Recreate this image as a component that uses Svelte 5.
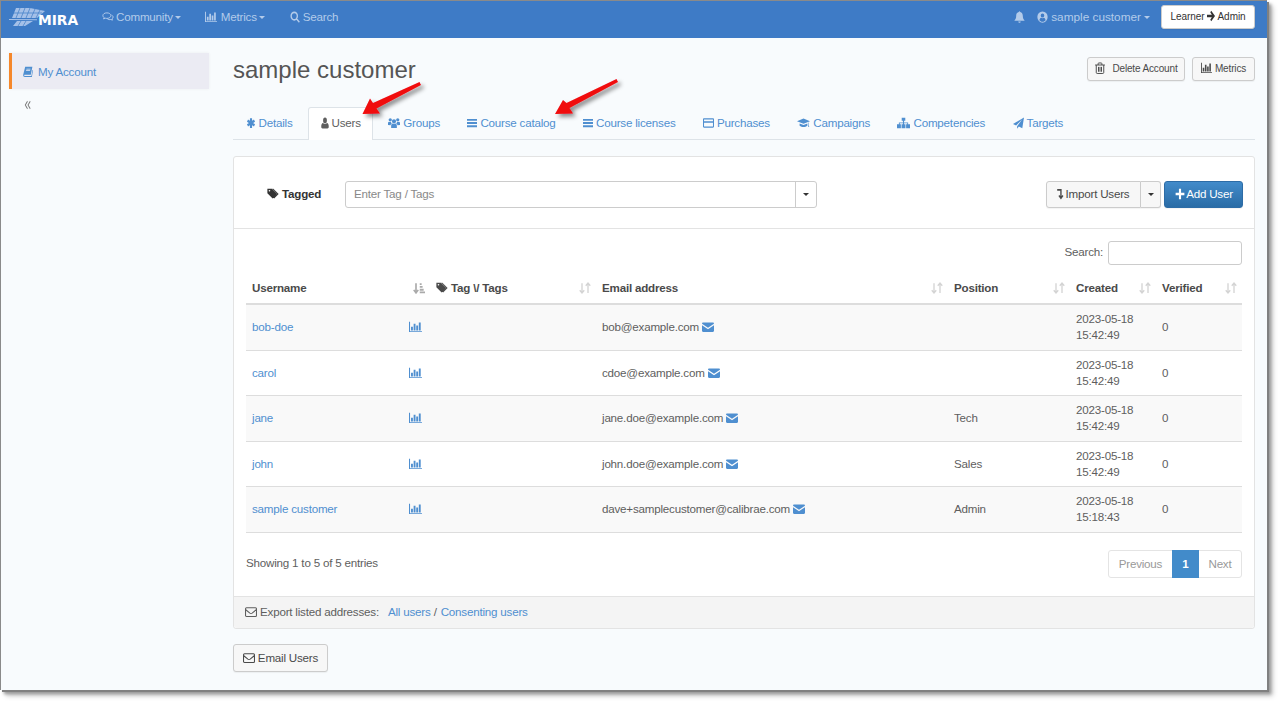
<script>
  const icons = {
    asterisk: { s: 'M8 1.500V14.500M2.400 4.750L13.600 11.250M13.600 4.750L2.400 11.250', w: 3.400 },
    user: { d: 'M8 .8a3.800 3.800 0 1 1 0 7.600A3.800 3.800 0 0 1 8 .8zM3 15.200c-1.500 0-2.500-.8-2.500-2.200 0-2.600.9-4.800 3.700-5 .9.900 2.300 1.400 3.800 1.400s2.900-.5 3.800-1.400c2.800.2 3.700 2.400 3.700 5 0 1.400-1 2.200-2.500 2.200z' },
    users: { d: 'M8 3a2.800 2.800 0 1 1 0 5.600A2.800 2.800 0 0 1 8 3zM3 1.500a2.200 2.200 0 1 1 0 4.400 2.200 2.200 0 0 1 0-4.400zM13 1.500a2.200 2.200 0 1 1 0 4.400 2.200 2.200 0 0 1 0-4.400zM4.200 14.500V11.500c0-1.600.9-2.700 2-3 .5.4 1.100.7 1.800.7s1.300-.3 1.800-.7c1.100.3 2 1.400 2 3v3zM0 10.500V8c0-1 .6-1.600 1.300-1.700.5.3 1 .5 1.600.5l.9-.1c.2.900.7 1.500 1.300 1.900-1 .5-1.600 1.300-1.800 2.400zM16 10.500V8c0-1-.6-1.600-1.300-1.700-.5.3-1 .5-1.600.5l-.9-.1c-.2.900-.7 1.500-1.300 1.900 1 .5 1.600 1.300 1.800 2.400z' },
    bars: { d: 'M0 2.500h16v2.500H0zM0 6.800h16v2.500H0zM0 11.100h16v2.500H0z' },
    card: { d: 'M1.500 1.800h13c.8 0 1.500.7 1.500 1.500v9.400c0 .8-.7 1.500-1.500 1.500h-13c-.8 0-1.500-.7-1.500-1.500V3.300c0-.8.7-1.500 1.500-1.500zM1.500 3.300v2.200h13V3.300zM1.500 7.800v4.900h13V7.800z' },
    cap: { d: 'M8 2L0 5.500l8 3.500 8-3.500zM3.200 8.500v3.100c1.300 1.200 3 1.800 4.800 1.800s3.500-.6 4.800-1.800V8.500L8 10.600zM14.600 7v4l.5 2h-1.600l.5-2V7.500z' },
    sitemap: { d: 'M5.800 1h4.400v4H8.700v2.300h5v2.200H16V15h-4.800V9.500h1.400V8.400H8.700v1.100h1.700V15H5.600V9.500h1.700V8.400H3.400v1.100h1.400V15H0V9.500h2.300V7.300h5V5H5.800z' },
    plane: { d: 'M16 .5L13.500 15l-5-2.300L6 15.800v-3.400L13.500 3l-9 8.300L0 9.300z' },
    tags: { d: 'M.5 1h6l7 7-6 6L.5 7zM3.300 2.600a1.100 1.100 0 1 0 0 2.200 1.100 1.100 0 0 0 0-2.200zM8.500 1l7 7-6 6-1.100-1.100L13.800 8 7 1z' },
    book: { d: 'M3.500 1H15l-2.500 10.500h-10c-.5 0-.7.4-.7.8 0 .6.4.9 1 .9h10.600l1.700-8 .9.6-1.800 9H3c-1.700 0-3-1-2.700-3zM5.500 3.500H12l-.2 1H5.300zM5 5.700h6.500l-.2 1H4.800z' },
    bell: { d: 'M8 .3c.6 0 1 .4 1 1 2.400.4 3.800 2.400 3.800 5 0 3.200.9 4.700 2.400 5.900v.9H.8v-.9c1.500-1.200 2.400-2.700 2.400-5.900 0-2.600 1.400-4.600 3.800-5 0-.6.4-1 1-1zM6.200 13.900h3.600c0 1.100-.8 1.800-1.800 1.800s-1.800-.7-1.800-1.800z' },
    usercircle: { d: 'M8 .5a7.500 7.500 0 1 1 0 15 7.500 7.500 0 0 1 0-15zM8 3.300a2.600 2.600 0 1 0 0 5.200 2.600 2.600 0 0 0 0-5.200zM3.500 12.300c1 1.200 2.700 2 4.500 2s3.500-.8 4.500-2c-.4-1.800-1.400-3-2.600-3.200-.5.4-1.200.6-1.900.6s-1.400-.2-1.900-.6c-1.200.2-2.200 1.400-2.600 3.200z' },
    arrow: { d: 'M8.500 1L16 8l-7.500 7-2-2L9.700 9.800H0V6.200h9.700L6.500 3z' },
    comments: { s: 'M6.500 2.500c-3 0-5.300 1.500-5.300 3.600 0 1.100.6 2 1.600 2.700l-.7 1.800 2.300-1c.7.2 1.400.3 2.100.3 3 0 5.300-1.700 5.300-3.800S9.500 2.500 6.500 2.500zM12.700 5.400c1.300.6 2.100 1.500 2.100 2.700 0 1-.6 1.800-1.500 2.400l.6 1.700-2.200-.9c-1.500.4-3.200.2-4.500-.8', w: 1.300 },
    chart: { d: 'M0 1h1.300v12.500H16v1.300H0zM2.500 7.500h2.300v5H2.500zM5.700 3.500h2.300v9H5.700zM8.900 6h2.300v6.500H8.900zM12.100 2h2.300v10.500h-2.300z' },
    search: { s: 'M6.800 1.800a5 5 0 1 1 0 10 5 5 0 0 1 0-10zM10.500 10.500L15 15', w: 2.200 },
    trash: { s: 'M1.500 4h13M5.500 4V2.300c0-.6.3-1 .8-1h3.400c.5 0 .8.4.8 1V4M3 4v10c0 .8.500 1.300 1.200 1.300h7.600c.7 0 1.200-.5 1.200-1.300V4M6 6.500v6.500M8 6.500v6.500M10 6.500v6.500', w: 1.300 },
    mail: { d: 'M1.500 2h13c.8 0 1.500.7 1.500 1.500L8 9 0 3.500C0 2.700.7 2 1.500 2zM0 5.500l8 5.500 8-5.500v7.500c0 .8-.7 1.500-1.500 1.500h-13C.7 14.500 0 13.800 0 13z' },
    mailo: { s: 'M2 2.300h12c.8 0 1.300.5 1.300 1.300v9c0 .8-.5 1.300-1.300 1.300H2c-.8 0-1.300-.5-1.300-1.300v-9c0-.8.5-1.300 1.300-1.300zM1 5l5.500 4.500c1 .7 2 .7 3 0L15 5', w: 1.400 },
    importi: { s: 'M3.500 2.500h6v10M6.300 10l3.200 3.700 3.200-3.700', w: 2.200 },
    plus: { d: 'M6.300 1h3.400v5.300H15v3.400H9.700V15H6.300V9.700H1V6.300h5.300z' },
    sort: { s: 'M4 1.500v13M1 11l3 3.500 3-3.500M12 14.500v-13M9 5l3-3.500L15 5', w: 1.800 },
    sorted: { s: 'M4 1.500v13M1 10.500l3 4 3-4', w: 2.200, d: 'M9 1.500h2.500v2.500H9zM9 5.300h3.800v2.500H9zM9 9.100h5.200v2.500H9zM9 12.500h7V15H9z' },
    dbl: { s: 'M7 3L2.500 8 7 13M12.500 3L8 8l4.500 5', w: 1.500 }
  };

  const rows = [
    { name: 'bob-doe', email: 'bob@example.com', pos: '', time: '15:42:49' },
    { name: 'carol', email: 'cdoe@example.com', pos: '', time: '15:42:49' },
    { name: 'jane', email: 'jane.doe@example.com', pos: 'Tech', time: '15:42:49' },
    { name: 'john', email: 'john.doe@example.com', pos: 'Sales', time: '15:42:49' },
    { name: 'sample customer', email: 'dave+samplecustomer@calibrae.com', pos: 'Admin', time: '15:18:43' }
  ];

  const tabs = [
    { label: 'Details', icon: 'asterisk', cls: 'w9' },
    { label: 'Users', icon: 'user', cls: 'w8' },
    { label: 'Groups', icon: 'users', cls: 'w12' },
    { label: 'Course catalog', icon: 'bars', cls: 'w10' },
    { label: 'Course licenses', icon: 'bars', cls: 'w10' },
    { label: 'Purchases', icon: 'card', cls: 'w11' },
    { label: 'Campaigns', icon: 'cap', cls: 'w13' },
    { label: 'Competencies', icon: 'sitemap', cls: 'w13' },
    { label: 'Targets', icon: 'plane', cls: 'w11' }
  ];
</script>

{#snippet ic(name, cls = 'w11')}
  <svg class="ic {cls}" viewBox="0 0 16 16" preserveAspectRatio="none" aria-hidden="true">
    {#if icons[name].d}<path d={icons[name].d} fill="currentColor" fill-rule="evenodd" />{/if}
    {#if icons[name].s}<path d={icons[name].s} fill="none" stroke="currentColor" stroke-width={icons[name].w} />{/if}
  </svg>
{/snippet}

{#snippet sortBtn(name = 'sort')}
  <svg class="ic w12 sorter" class:dark={name === 'sorted'} viewBox="0 0 16 16" aria-hidden="true">
    {#if icons[name].d}<path d={icons[name].d} fill="currentColor" />{/if}
    <path d={icons[name].s} fill="none" stroke="currentColor" stroke-width={icons[name].w} />
  </svg>
{/snippet}

<div class="page">
<div class="frame">
  <header class="nav">
    <div class="logo">
      <svg class="stripes" viewBox="0 0 38 20" aria-hidden="true">
        <path d="M7 1h14l15 3-8 7H3zM0 12l28 .3v.9L0 13zM8 14h16l-8 5H4z" fill="#a4c0e8" />
        <path d="M11 1L7 11M16 1l-4 10M21 1l-4 10M26 2l-4 9M31 3l-4 8M12 14l-3 5M17 14l-3 5M3 6h30" stroke="#3e7bc6" stroke-width=".7" fill="none" />
      </svg>
      <span class="mira">MIRA</span>
    </div>
    <nav class="links">
      <a class="nl community">{@render ic('comments', 'w12 g2')}Community<i class="caret"></i></a>
      <a class="nl metrics">{@render ic('chart', 'w12 g4')}Metrics<i class="caret"></i></a>
      <a class="nl">{@render ic('search', 'w10')}Search</a>
    </nav>
    <div class="navright">
      {@render ic('bell', 'w11 bell')}
      <a class="nl acct">{@render ic('usercircle', 'w11')}sample customer<i class="caret"></i></a>
      <button class="btn switch">Learner{@render ic('arrow', 'w8 arrowgap')}Admin</button>
    </div>
  </header>

  <div class="body">
    <aside class="side">
      <div class="sideitem">{@render ic('book', 'w10')}My Account</div>
      <div class="collapse">{@render ic('dbl', 'w8')}</div>
    </aside>

    <main class="main">
      <div class="titlerow">
        <h1>sample customer</h1>
        <div class="topbtns">
          <button class="btn small del">{@render ic('trash', 'w12 gap6')}Delete Account</button>
          <button class="btn small met">{@render ic('chart', 'w11')}Metrics</button>
        </div>
      </div>

      <ul class="tabs">
        {#each tabs as t}
          <li class="tab" class:active={t.label === 'Users'}>{@render ic(t.icon, t.cls)}{t.label}</li>
        {/each}
      </ul>

      <section class="panel">
        <div class="filter">
          <label class="tagged" for="tagInput">{@render ic('tags', 'w12')}Tagged</label>
          <div class="combo">
            <input id="tagInput" placeholder="Enter Tag / Tags" />
            <span class="combocaret"><i class="caret dark"></i></span>
          </div>
          <div class="actions">
            <div class="group">
              <button class="btn import">{@render ic('importi', 'w10 tight')}Import Users</button>
              <button class="btn split"><i class="caret dark"></i></button>
            </div>
            <button class="btn add">{@render ic('plus', 'w10 tight')}Add User</button>
          </div>
        </div>

        <div class="content">
          <div class="searchrow">
            <label for="search">Search:</label>
            <input id="search" />
          </div>

          <table>
            <colgroup>
              <col class="c1" /><col class="c2" /><col class="c3" /><col class="c4" /><col class="c5" /><col class="c6" /><col class="c7" />
            </colgroup>
            <thead>
              <tr>
                <th>Username</th>
                <th>{@render sortBtn('sorted')}</th>
                <th>{@render ic('tags', 'w12')}Tag \/ Tags{@render sortBtn()}</th>
                <th>Email address{@render sortBtn()}</th>
                <th>Position{@render sortBtn()}</th>
                <th>Created{@render sortBtn()}</th>
                <th>Verified{@render sortBtn()}</th>
              </tr>
            </thead>
            <tbody>
              {#each rows as r}
                <tr>
                  <td><a class="lnk">{r.name}</a></td>
                  <td><a class="lnk">{@render ic('chart', 'w13 flush')}</a></td>
                  <td></td>
                  <td>{r.email} <span class="lnk">{@render ic('mail', 'w12 flush')}</span></td>
                  <td>{r.pos}</td>
                  <td>2023-05-18<br />{r.time}</td>
                  <td>0</td>
                </tr>
              {/each}
            </tbody>
          </table>

          <div class="tfoot">
            <span>Showing 1 to 5 of 5 entries</span>
            <div class="pager">
              <span class="pg">Previous</span><span class="pg on">1</span><span class="pg">Next</span>
            </div>
          </div>
        </div>

        <div class="pfoot">
          {@render ic('mailo', 'w12')}Export listed addresses:
          <a class="lnk first">All users</a> / <a class="lnk second">Consenting users</a>
        </div>
      </section>

      <button class="btn email">{@render ic('mailo', 'w12')}Email Users</button>
    </main>
  </div>
</div>
</div>

<svg class="arrows" viewBox="0 0 1280 704" aria-hidden="true">
  <defs>
    <filter id="sh" x="-30%" y="-30%" width="170%" height="170%">
      <feDropShadow dx="3" dy="3" stdDeviation="2" flood-color="#000" flood-opacity=".45" />
    </filter>
  </defs>
  <path filter="url(#sh)" fill="#f0090f" d="M419.500 82L421 85L376.500 108.500L380 113.500L362.500 114L370 98.500L373 103z" />
  <path filter="url(#sh)" fill="#f0090f" d="M616.500 79L618 82L569.500 108L573 113.500L555 114L563 100L566.500 103z" />
</svg>

<style>
  :global(body) {
    margin: 0;
    background: #fff;
    font-family: "Liberation Sans", Arial, sans-serif;
    font-size: 11.600px;
    letter-spacing: -.2px;
    line-height: 16px;
    color: #5e5e5e;
  }

  .page {
    height: 704px;
    overflow: hidden;
    background: #fff;
  }

  .frame {
    width: 1267px;
    height: 690px;
    border: 1px solid #8a8a8a;
    border-width: 1px 0 0 1px;
    box-sizing: border-box;
    background: #f8fbfd;
    box-shadow: 2px 2px 0 #808080, 4px 4px 3px #999, 6px 6px 5px #ccc;
    display: flex;
    flex-direction: column;
  }

  .ic { display: inline-block; vertical-align: -2px; margin-right: 3px; height: 12px; flex: none; }
  .w8 { width: 8px; }
  .w9 { width: 10px; }
  .w10 { width: 10px; }
  .w11 { width: 11px; }
  .w12 { width: 12px; }
  .w13 { width: 13px; }
  .tight { margin: 0 1px; }
  .arrowgap { margin: 0 3px 0 2px; }
  .flush { margin-right: 0; }
  .gap6 { margin-right: 6px; }
  .g2 { margin-right: 2px; }
  .g4 { margin-right: 4px; }

  .caret {
    display: inline-block;
    width: 0;
    height: 0;
    margin-left: 2px;
    vertical-align: 2px;
    border-top: 3px solid currentColor;
    border-left: 3px solid transparent;
    border-right: 3px solid transparent;
  }
  .caret.dark { color: #333; margin: 0; }

  .nav {
    height: 37px;
    flex: none;
    display: flex;
    align-items: center;
    background: #3e7bc6;
    color: #b3cbea;
    padding-bottom: 5px;
    box-sizing: border-box;
  }
  .logo { display: flex; align-items: flex-start; width: 77px; margin: 3px 0 0 8px; height: 24px; }
  .stripes { width: 38px; height: 20px; flex: none; }
  .mira {
    color: #fff;
    font-family: "DejaVu Sans", sans-serif;
    font-weight: 700;
    font-size: 13.800px;
    letter-spacing: 0;
    margin-left: -9px;
    margin-top: 6px;
    line-height: 14px;
  }
  .links { display: flex; align-items: center; margin-left: 16px; }
  .nl { color: inherit; white-space: nowrap; }
  .community { margin-right: 24px; }
  .metrics { margin-right: 25px; }
  .navright { margin-left: auto; display: flex; align-items: center; margin-right: 12px; }
  .navright :global(.bell) { margin-right: 12px; }
  .acct { margin-right: 11px; font-size: 11.800px; letter-spacing: 0; }
  .acct .caret { margin-left: 3px; }

  .btn {
    font: inherit;
    letter-spacing: inherit;
    color: #4a4a4a;
    background: #f7f7f7;
    border: 1px solid #ccc;
    border-radius: 3px;
    cursor: pointer;
    padding: 0;
    white-space: nowrap;
    box-shadow: 0 1px 1px rgba(0, 0, 0, .05);
  }
  .switch {
    width: 94px;
    height: 24px;
    background: #fff;
    font-size: 10px;
    letter-spacing: -.05px;
    color: #333;
  }

  .body { flex: 1; display: flex; min-height: 0; }
  .side { width: 232px; flex: none; padding: 15px 0 0 8px; box-sizing: border-box; }
  .sideitem {
    width: 200px;
    height: 36px;
    display: flex;
    align-items: center;
    padding: 2px 0 0 11px;
    box-sizing: border-box;
    background: #ebebf3;
    border-left: 3px solid #f5872a;
    color: #4f8fd0;
    box-shadow: 0 0 3px rgba(0, 0, 0, .06);
  }
  .sideitem :global(.ic) { margin-right: 5px; }
  .collapse { margin: 8px 0 0 15px; color: #777; }

  .main { flex: 1; padding-right: 12px; min-width: 0; }
  .titlerow { display: flex; justify-content: space-between; height: 69px; }
  h1 { margin: 19px 0 0; font-weight: 400; font-size: 24px; letter-spacing: 0; line-height: 26px; color: #555; }
  .topbtns { display: flex; gap: 7px; padding-top: 19px; }
  .small { height: 24px; font-size: 10px; letter-spacing: -.15px; }
  .del { width: 98px; }
  .met { width: 63px; }

  .tabs {
    list-style: none;
    margin: 0;
    padding: 0;
    display: flex;
    gap: 2.400px;
    height: 33px;
    border-bottom: 1px solid #dde3e8;
    box-sizing: border-box;
  }
  .tab {
    padding: 7px 11.500px 0;
    height: 33px;
    box-sizing: border-box;
    color: #4f8fd0;
    border: 1px solid transparent;
    border-bottom: 0;
    white-space: nowrap;
  }
  .tab:first-child { margin-right: .6px; }
  .tab.active {
    background: #fff;
    color: #5e5e5e;
    border-color: #dde3e8;
    border-radius: 3px 3px 0 0;
  }

  .panel {
    margin-top: 16px;
    height: 473px;
    box-sizing: border-box;
    background: #fff;
    border: 1px solid #e3e3e3;
    border-radius: 3px;
    display: flex;
    flex-direction: column;
  }
  .filter {
    height: 72px;
    flex: none;
    box-sizing: border-box;
    border-bottom: 1px solid #e3e3e3;
    display: flex;
    align-items: center;
    padding: 3px 11px 0 33px;
  }
  .tagged { width: 78px; font-weight: 700; color: #333; flex: none; }
  .combo {
    width: 472px;
    height: 27px;
    box-sizing: border-box;
    border: 1px solid #ccc;
    border-radius: 3px;
    display: flex;
    background: #fff;
  }
  .combo input {
    flex: 1;
    border: 0;
    outline: 0;
    font: inherit;
    letter-spacing: inherit;
    padding: 0 8px;
    background: transparent;
    min-width: 0;
  }
  input::placeholder { color: #888; opacity: 1; }
  .combocaret {
    width: 20px;
    border-left: 1px solid #ccc;
    display: flex;
    align-items: center;
    justify-content: center;
  }
  .actions { display: flex; gap: 3px; margin-left: auto; }
  .group { display: flex; }
  .import { width: 95px; height: 27px; padding-right: 4px; border-radius: 3px 0 0 3px; }
  .split { width: 20px; height: 27px; border-left: 0; border-radius: 0 3px 3px 0; }
  .add {
    width: 79px;
    height: 27px;
    color: #fff;
    border-color: #2d6ca6;
    background: linear-gradient(#428bca, #2a6ca6);
  }

  .content { flex: 1; padding: 12px 12px 0; min-height: 0; }
  .searchrow { display: flex; justify-content: flex-end; align-items: center; gap: 5px; height: 24px; }
  .searchrow label { margin-top: -2px; }
  .searchrow input {
    width: 134px;
    height: 24px;
    box-sizing: border-box;
    border: 1px solid #ccc;
    border-radius: 3px;
    outline: 0;
  }

  table { width: 100%; border-collapse: collapse; table-layout: fixed; margin-top: 10px; }
  .c1 { width: 157px; }
  .c2 { width: 27px; }
  .c3 { width: 166px; }
  .c4 { width: 352px; }
  .c5 { width: 122px; }
  .c6 { width: 86px; }
  .c7 { width: 86px; }
  th {
    text-align: left;
    font-weight: 700;
    height: 29px;
    padding: 0 6px 3px;
    box-sizing: border-box;
    border-bottom: 2px solid #ddd;
    position: relative;
    white-space: nowrap;
    color: #4a4a4a;
  }
  .sorter { position: absolute; right: 5px; top: 7px; margin: 0; color: #d4d4d4; }
  .sorter.dark { color: #aaa; }
  td { padding: 6.250px 6px; box-sizing: border-box; border-bottom: 1px solid #ddd; white-space: nowrap; }
  tbody tr:nth-child(odd) td { background: #f9f9f9; }
  .lnk { color: #4f8fd0; }
  .tfoot { display: flex; justify-content: space-between; align-items: center; margin-top: 17px; }
  .tfoot > span { margin-top: -2px; }
  .pager {
    display: flex;
    height: 28px;
    border: 1px solid #e4e4e4;
    border-radius: 3px;
    box-sizing: border-box;
  }
  .pg { display: flex; align-items: center; padding: 0 9.500px; color: #999; }
  .pg.on { background: #428bca; color: #fff; font-weight: 700; margin: -1px 0; padding: 0 10.500px; }

  .pfoot {
    height: 32px;
    flex: none;
    box-sizing: border-box;
    background: #f4f4f4;
    border-top: 1px solid #e3e3e3;
    padding: 0 11px 2px;
    display: flex;
    align-items: center;
    white-space: pre;
    border-radius: 0 0 3px 3px;
  }
  .pfoot .first { margin-left: 6px; }
  .pfoot .second { margin-left: 1px; }

  .email {
    margin-top: 15px;
    width: 95px;
    height: 28px;
  }

  .arrows { position: absolute; left: 0; top: 0; width: 1280px; height: 704px; pointer-events: none; }
</style>
